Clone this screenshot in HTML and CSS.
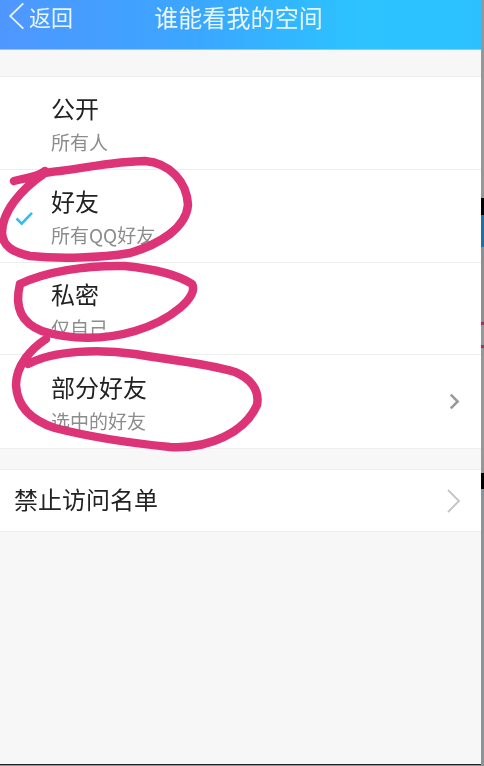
FILE: index.html
```html
<!DOCTYPE html>
<html lang="zh">
<head>
<meta charset="utf-8">
<title>谁能看我的空间</title>
<link rel="stylesheet" href="styles.css">
</head>
<body>
<div class="phone">
  <header class="topbar">
    <div class="back">
      <svg class="back-icon" viewBox="0 0 20 32" aria-hidden="true"><path d="M17 1.500 L2.500 15.500 L17 29.500"/></svg>
      <span>返回</span>
    </div>
    <h1 class="title">谁能看我的空间</h1>
  </header>
  <section class="group group-first">
    <div class="row option">
      <div class="mark"></div>
      <div class="labels"><div class="name">公开</div><div class="sub">所有人</div></div>
    </div>
    <div class="row option">
      <div class="mark"><svg class="check" viewBox="0 0 20 16" aria-hidden="true"><path d="M1.500 8 L7 13.500 L18 2"/></svg></div>
      <div class="labels"><div class="name">好友</div><div class="sub">所有QQ好友</div></div>
    </div>
    <div class="row option">
      <div class="mark"></div>
      <div class="labels"><div class="name">私密</div><div class="sub">仅自己</div></div>
    </div>
    <div class="row option">
      <div class="mark"></div>
      <div class="labels"><div class="name">部分好友</div><div class="sub">选中的好友</div></div>
      <svg class="chev-small" viewBox="0 0 10 16" aria-hidden="true"><path d="M1.500 1.500 L8 8 L1.500 14.500"/></svg>
    </div>
  </section>
  <section class="group group-second">
    <div class="row single">
      <div class="name">禁止访问名单</div>
      <svg class="chev-large" viewBox="0 0 14 24" aria-hidden="true"><path d="M1 1 L12 12 L1 23"/></svg>
    </div>
  </section>
  <svg class="ink" viewBox="0 0 484 766" aria-hidden="true">
    <path d="M14 181 C30 177 38 177 45 171 C44 175 45 172 60 171 C90 167 120 161 145 161 C170 163 187 182 188 205 C186 228 160 244 130 253 C100 258 60 259 30 256 C12 252 3 246 2 233 C2 212 20 190 45 173"/>
    <path d="M20 284 C45 272 85 265 125 266 C155 269 178 275 192 284 C199 296 172 320 135 331 C105 340 70 340 42 331 C22 323 14 308 20 284"/>
    <path d="M46 339 C32 348 16 365 16 385 C17 405 30 420 55 428 C90 437 130 443 170 447 C210 449 245 432 257 405 C260 390 250 378 235 372 C205 363 170 360 135 354 C100 349 55 350 28 364"/>
  </svg>
</div>
</body>
</html>
```

FILE: styles.css
```css
* { box-sizing: border-box; }
html, body {
  margin: 0;
  height: 100%;
  overflow: hidden;
}
body {
  font-family: "Noto Sans CJK SC", "Noto Sans", sans-serif;
  background: linear-gradient(180deg,
    #979797 0, #979797 198px,
    #000 198px, #000 215px,
    #1f6fa8 215px, #1f6fa8 247px,
    #8f8f8f 247px, #8f8f8f 322px,
    #b02a60 322px, #b02a60 325px,
    #979797 325px, #979797 345px,
    #b02a60 345px, #b02a60 348px,
    #979797 348px, #979797 473px,
    #000 473px, #000 489px,
    #8c9499 489px, #8c9499 766px);
}
.phone {
  position: relative;
  width: 481px;
  height: 765px;
  background: #f7f7f7;
  border-bottom: 1px solid #222;
  overflow: hidden;
  filter: blur(0.350px);
}
.topbar {
  position: relative;
  height: 50px;
  display: flex;
  align-items: center;
  justify-content: center;
  color: #e8f6ff;
  background: linear-gradient(90deg, #4f97ff 0%, #3ba6ff 40%, #2cc3ff 75%, #2cc0ff 100%);
  border-bottom: 1px solid #7fd0ff;
}
.back {
  position: absolute;
  left: 8px;
  top: 0;
  height: 32px;
  display: flex;
  align-items: center;
  gap: 3px;
  font-size: 22px;
  line-height: 32px;
}
.back-icon {
  width: 18px;
  height: 29px;
  fill: none;
  stroke: #e8f6ff;
  stroke-width: 2;
}
.title {
  margin: 0 0 15px 0;
  font-size: 24px;
  line-height: 34px;
  font-weight: 400;
  letter-spacing: 0.100px;
  transform: translateX(-2px);
}
.group {
  background: #fff;
  border-top: 1px solid #eeeeee;
  border-bottom: 1px solid #eeeeee;
}
.group-first { margin-top: 26px; }
.group-second { margin-top: 20px; }
.row {
  display: flex;
  align-items: center;
  background: #fff;
}
.option {
  height: 92.750px;
  border-bottom: 1px solid #eeeeee;
}
.option:last-child { border-bottom: 0; }
.mark {
  width: 51px;
  flex: none;
  display: flex;
  align-items: center;
  padding-left: 15px;
  padding-top: 5px;
}
.check {
  width: 19px;
  height: 15px;
  fill: none;
  stroke: #2fbdf2;
  stroke-width: 2.800;
}
.labels {
  flex: 1;
  display: flex;
  flex-direction: column;
  gap: 4px;
}
.name {
  font-size: 24px;
  line-height: 34px;
  color: #222;
}
.sub {
  font-size: 19px;
  line-height: 25px;
  color: #8c8c8c;
}
.chev-small {
  width: 11px;
  height: 17px;
  margin-right: 21px;
  fill: none;
  stroke: #999;
  stroke-width: 2.400;
}
.single {
  height: 61px;
  justify-content: space-between;
  padding-left: 14px;
  padding-right: 20px;
  padding-bottom: 3px;
}
.chev-large {
  width: 14px;
  height: 24px;
  margin-top: 3px;
  fill: none;
  stroke: #c4c4c4;
  stroke-width: 1.800;
}
.ink {
  position: absolute;
  left: 0;
  top: 0;
  width: 484px;
  height: 766px;
  fill: none;
  stroke: #dd3377;
  stroke-width: 8.500;
  stroke-linecap: round;
  stroke-linejoin: round;
  pointer-events: none;
}
```
